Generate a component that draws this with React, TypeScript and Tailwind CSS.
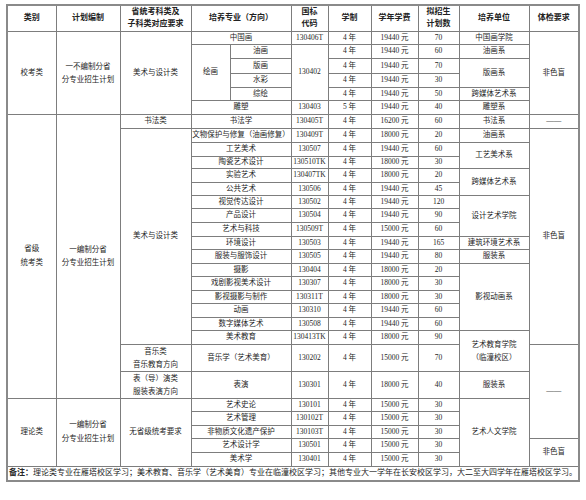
import React from "react";

const cell = "border border-[#7d7d7d] p-0 text-center align-middle";
const head = "border border-[#7d7d7d] p-0 text-center align-middle font-bold text-[8px] leading-[12px] text-[#222]";

function C({
  children,
  rs,
  cs,
  className = "",
}: {
  children?: React.ReactNode;
  rs?: number;
  cs?: number;
  className?: string;
}) {
  return (
    <td rowSpan={rs} colSpan={cs} className={`${cell} ${className}`}>
      {children}
    </td>
  );
}

export default function App() {
  return (
    <div className="w-[586px] h-[500px] bg-white pt-[4px] pl-[6px] text-[#262626] font-['Liberation_Serif','Noto_Sans_CJK_SC',serif] text-[7.5px] leading-[10px]">
      <table className="table-fixed border-collapse border-2 border-[#8a8a8a] w-[572px]">
        <colgroup>
          <col className="w-[49px]" />
          <col className="w-[64px]" />
          <col className="w-[71px]" />
          <col className="w-[39px]" />
          <col className="w-[61px]" />
          <col className="w-[37px]" />
          <col className="w-[43px]" />
          <col className="w-[47px]" />
          <col className="w-[41px]" />
          <col className="w-[70px]" />
          <col className="w-[50px]" />
        </colgroup>
        <tbody>
          {/* Header */}
          <tr className="h-[26px]">
            <th className={head}>类别</th>
            <th className={head}>计划编制</th>
            <th className={head}>
              省统考科类及
              <br />
              子科类对应要求
            </th>
            <th colSpan={2} className={head}>培养专业（方向）</th>
            <th className={head}>
              国标
              <br />
              代码
            </th>
            <th className={head}>学制</th>
            <th className={head}>学年学费</th>
            <th className={head}>
              拟招生
              <br />
              计划数
            </th>
            <th className={head}>培养单位</th>
            <th className={head}>体检要求</th>
          </tr>

          {/* 校考类 */}
          <tr className="h-[13px]">
            <C rs={6}>校考类</C>
            <C rs={6} className="leading-[13px]">
              一不编制分省
              <br />
              分专业招生计划
            </C>
            <C rs={6}>美术与设计类</C>
            <C cs={2}>中国画</C>
            <C>130406T</C>
            <C>4 年</C>
            <C>19440 元</C>
            <C>70</C>
            <C>中国画学院</C>
            <C rs={6}>非色盲</C>
          </tr>
          <tr className="h-[14px]">
            <C rs={4}>绘画</C>
            <C>油画</C>
            <C rs={4}>130402</C>
            <C>4 年</C>
            <C>19440 元</C>
            <C>60</C>
            <C>油画系</C>
          </tr>
          <tr className="h-[15px]">
            <C>版画</C>
            <C>4 年</C>
            <C>19440 元</C>
            <C>70</C>
            <C rs={2}>版画系</C>
          </tr>
          <tr className="h-[14px]">
            <C>水彩</C>
            <C>4 年</C>
            <C>19440 元</C>
            <C>30</C>
          </tr>
          <tr className="h-[13px]">
            <C>综绘</C>
            <C>4 年</C>
            <C>19440 元</C>
            <C>50</C>
            <C>跨媒体艺术系</C>
          </tr>
          <tr className="h-[14px]">
            <C cs={2}>雕塑</C>
            <C>130403</C>
            <C>5 年</C>
            <C>19440 元</C>
            <C>40</C>
            <C>雕塑系</C>
          </tr>

          {/* 省级统考类 */}
          <tr className="h-[14px]">
            <C rs={19} className="leading-[14px]">
              省级
              <br />
              统考类
            </C>
            <C rs={19} className="leading-[13px]">
              一编制分省
              <br />
              分专业招生计划
            </C>
            <C>书法类</C>
            <C cs={2}>书法学</C>
            <C>130405T</C>
            <C>4 年</C>
            <C>16200 元</C>
            <C>60</C>
            <C>书法系</C>
            <C>——</C>
          </tr>
          <tr className="h-[14px]">
            <C rs={16}>美术与设计类</C>
            <C cs={2} className="whitespace-nowrap">文物保护与修复（油画修复）</C>
            <C>130409T</C>
            <C>4 年</C>
            <C>18000 元</C>
            <C>20</C>
            <C>油画系</C>
            <C rs={16}>非色盲</C>
          </tr>
          <tr className="h-[14px]">
            <C cs={2}>工艺美术</C>
            <C>130507</C>
            <C>4 年</C>
            <C>19440 元</C>
            <C>60</C>
            <C rs={2}>工艺美术系</C>
          </tr>
          <tr className="h-[12px]">
            <C cs={2}>陶瓷艺术设计</C>
            <C>130510TK</C>
            <C>4 年</C>
            <C>18000 元</C>
            <C>30</C>
          </tr>
          <tr className="h-[14px]">
            <C cs={2}>实验艺术</C>
            <C>130407TK</C>
            <C>4 年</C>
            <C>18000 元</C>
            <C>20</C>
            <C rs={2}>跨媒体艺术系</C>
          </tr>
          <tr className="h-[13px]">
            <C cs={2}>公共艺术</C>
            <C>130506</C>
            <C>4 年</C>
            <C>19440 元</C>
            <C>45</C>
          </tr>
          <tr className="h-[13px]">
            <C cs={2}>视觉传达设计</C>
            <C>130502</C>
            <C>4 年</C>
            <C>19440 元</C>
            <C>120</C>
            <C rs={3}>设计艺术学院</C>
          </tr>
          <tr className="h-[14px]">
            <C cs={2}>产品设计</C>
            <C>130504</C>
            <C>4 年</C>
            <C>19440 元</C>
            <C>90</C>
          </tr>
          <tr className="h-[14px]">
            <C cs={2}>艺术与科技</C>
            <C>130509T</C>
            <C>4 年</C>
            <C>15000 元</C>
            <C>60</C>
          </tr>
          <tr className="h-[13px]">
            <C cs={2}>环境设计</C>
            <C>130503</C>
            <C>4 年</C>
            <C>19440 元</C>
            <C>165</C>
            <C>建筑环境艺术系</C>
          </tr>
          <tr className="h-[14px]">
            <C cs={2}>服装与服饰设计</C>
            <C>130505</C>
            <C>4 年</C>
            <C>19440 元</C>
            <C>80</C>
            <C>服装系</C>
          </tr>
          <tr className="h-[13px]">
            <C cs={2}>摄影</C>
            <C>130404</C>
            <C>4 年</C>
            <C>18000 元</C>
            <C>20</C>
            <C rs={5}>影视动画系</C>
          </tr>
          <tr className="h-[14px]">
            <C cs={2}>戏剧影视美术设计</C>
            <C>130307</C>
            <C>4 年</C>
            <C>18000 元</C>
            <C>30</C>
          </tr>
          <tr className="h-[13px]">
            <C cs={2}>影视摄影与制作</C>
            <C>130311T</C>
            <C>4 年</C>
            <C>18000 元</C>
            <C>30</C>
          </tr>
          <tr className="h-[14px]">
            <C cs={2}>动画</C>
            <C>130310</C>
            <C>4 年</C>
            <C>19440 元</C>
            <C>60</C>
          </tr>
          <tr className="h-[13px]">
            <C cs={2}>数字媒体艺术</C>
            <C>130508</C>
            <C>4 年</C>
            <C>19440 元</C>
            <C>60</C>
          </tr>
          <tr className="h-[14px]">
            <C cs={2}>美术教育</C>
            <C>130413TK</C>
            <C>4 年</C>
            <C>18000 元</C>
            <C>90</C>
            <C rs={2} className="leading-[13px]">
              艺术教育学院
              <br />
              （临潼校区）
            </C>
          </tr>
          <tr className="h-[25px]">
            <C className="leading-[13px]">
              音乐类
              <br />
              音乐教育方向
            </C>
            <C cs={2}>音乐学（艺术美育）</C>
            <C>130202</C>
            <C>4 年</C>
            <C>15000 元</C>
            <C>70</C>
            <C rs={5}>——</C>
          </tr>
          <tr className="h-[27px]">
            <C className="leading-[13px]">
              表（导）演类
              <br />
              服装表演方向
            </C>
            <C cs={2}>表演</C>
            <C>130301</C>
            <C>4 年</C>
            <C>18000 元</C>
            <C>40</C>
            <C>服装系</C>
          </tr>

          {/* 理论类 */}
          <tr className="h-[13px]">
            <C rs={5}>理论类</C>
            <C rs={5} className="leading-[14px]">
              一编制分省
              <br />
              分专业招生计划
            </C>
            <C rs={5}>无省级统考要求</C>
            <C cs={2}>艺术史论</C>
            <C>130101</C>
            <C>4 年</C>
            <C>15000 元</C>
            <C>30</C>
            <C rs={5}>艺术人文学院</C>
          </tr>
          <tr className="h-[14px]">
            <C cs={2}>艺术管理</C>
            <C>130102T</C>
            <C>4 年</C>
            <C>15000 元</C>
            <C>30</C>
          </tr>
          <tr className="h-[13px]">
            <C cs={2}>非物质文化遗产保护</C>
            <C>130103T</C>
            <C>4 年</C>
            <C>15000 元</C>
            <C>30</C>
          </tr>
          <tr className="h-[14px]">
            <C cs={2}>艺术设计学</C>
            <C>130501</C>
            <C>4 年</C>
            <C>15000 元</C>
            <C>30</C>
            <C rs={2}>非色盲</C>
          </tr>
          <tr className="h-[14px]">
            <C cs={2}>美术学</C>
            <C>130401</C>
            <C>4 年</C>
            <C>15000 元</C>
            <C>30</C>
          </tr>

          {/* Note */}
          <tr className="h-[15px]">
            <td colSpan={11} className="border border-[#7d7d7d] px-[1px] py-0 text-left align-middle text-[8px] whitespace-nowrap">
              <span className="font-bold">备注：</span>
              理论类专业在雁塔校区学习；美术教育、音乐学（艺术美育）专业在临潼校区学习；其他专业大一学年在长安校区学习，大二至大四学年在雁塔校区学习。
            </td>
          </tr>
        </tbody>
      </table>
    </div>
  );
}
